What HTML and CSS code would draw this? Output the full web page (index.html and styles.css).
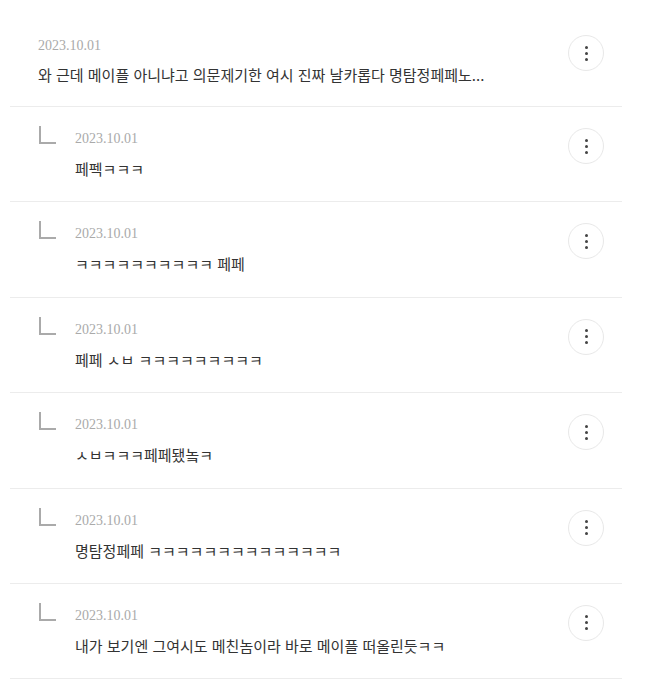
FILE: index.html
```html
<!DOCTYPE html>
<html lang="ko">
<head>
<meta charset="utf-8">
<title>댓글</title>
<link rel="stylesheet" href="styles.css">
</head>
<body>
<ul class="comment-list">
  <li class="comment first">
    <div class="comment-body">
      <div class="comment-date">2023.10.01</div>
      <p class="comment-text">와 근데 메이플 아니냐고 의문제기한 여시 진짜 날카롭다 명탐정페페노...</p>
    </div>
    <button class="more-btn" type="button"><span></span><span></span><span></span></button>
  </li>
  <li class="comment reply">
    <i class="reply-mark"></i>
    <div class="comment-body">
      <div class="comment-date">2023.10.01</div>
      <p class="comment-text">페펙ㅋㅋㅋ</p>
    </div>
    <button class="more-btn" type="button"><span></span><span></span><span></span></button>
  </li>
  <li class="comment reply">
    <i class="reply-mark"></i>
    <div class="comment-body">
      <div class="comment-date">2023.10.01</div>
      <p class="comment-text">ㅋㅋㅋㅋㅋㅋㅋㅋㅋㅋ 페페</p>
    </div>
    <button class="more-btn" type="button"><span></span><span></span><span></span></button>
  </li>
  <li class="comment reply">
    <i class="reply-mark"></i>
    <div class="comment-body">
      <div class="comment-date">2023.10.01</div>
      <p class="comment-text">페페 ㅅㅂ ㅋㅋㅋㅋㅋㅋㅋㅋㅋ</p>
    </div>
    <button class="more-btn" type="button"><span></span><span></span><span></span></button>
  </li>
  <li class="comment reply">
    <i class="reply-mark"></i>
    <div class="comment-body">
      <div class="comment-date">2023.10.01</div>
      <p class="comment-text">ㅅㅂㅋㅋㅋ페페됐놐ㅋ</p>
    </div>
    <button class="more-btn" type="button"><span></span><span></span><span></span></button>
  </li>
  <li class="comment reply">
    <i class="reply-mark"></i>
    <div class="comment-body">
      <div class="comment-date">2023.10.01</div>
      <p class="comment-text">명탐정페페 ㅋㅋㅋㅋㅋㅋㅋㅋㅋㅋㅋㅋㅋㅋ</p>
    </div>
    <button class="more-btn" type="button"><span></span><span></span><span></span></button>
  </li>
  <li class="comment reply">
    <i class="reply-mark"></i>
    <div class="comment-body">
      <div class="comment-date">2023.10.01</div>
      <p class="comment-text">내가 보기엔 그여시도 메친놈이라 바로 메이플 떠올린듯ㅋㅋ</p>
    </div>
    <button class="more-btn" type="button"><span></span><span></span><span></span></button>
  </li>
</ul>
</body>
</html>
```
FILE: styles.css
```css
body{
	margin: 0;
	background: #fff;
	font-family: "Liberation Serif", "Noto Sans CJK KR", serif;
	color: #333;
}
.comment-list{
	list-style: none;
	margin: 0 23px 0 10px;
	padding: 0;
}
.comment{
	display: flex;
	align-items: flex-start;
	padding: 22px 18px 21.4px 28px;
	border-bottom: 1px solid #ececec;
}
.comment.first{
	padding-top: 36px;
	padding-bottom: 20px;
}
.comment-body{
	flex: 1;
	min-width: 0;
}
.comment-date{
	font-size: 14px;
	line-height: 20px;
	color: #aaa;
}
.comment-text{
	margin: 9px 0 0;
	font-family: "Noto Sans CJK KR", sans-serif;
	font-size: 15px;
	line-height: 22px;
	color: #333;
}
.comment.first .comment-text{ margin-top: 8px; }
.reply-mark{
	display: block;
	width: 15px;
	height: 16px;
	margin: -3px 19px 0 1px;
	border-left: 2px solid #aaa;
	border-bottom: 2px solid #aaa;
}
.more-btn{
	display: flex;
	flex-direction: column;
	align-items: center;
	justify-content: center;
	gap: 3px;
	width: 36px;
	height: 36px;
	margin-top: -1px;
	padding: 0;
	border: 1px solid #e8e8e8;
	border-radius: 50%;
	background: #fff;
}
.more-btn span{
	width: 3px;
	height: 3px;
	border-radius: 50%;
	background: #444;
}
```
